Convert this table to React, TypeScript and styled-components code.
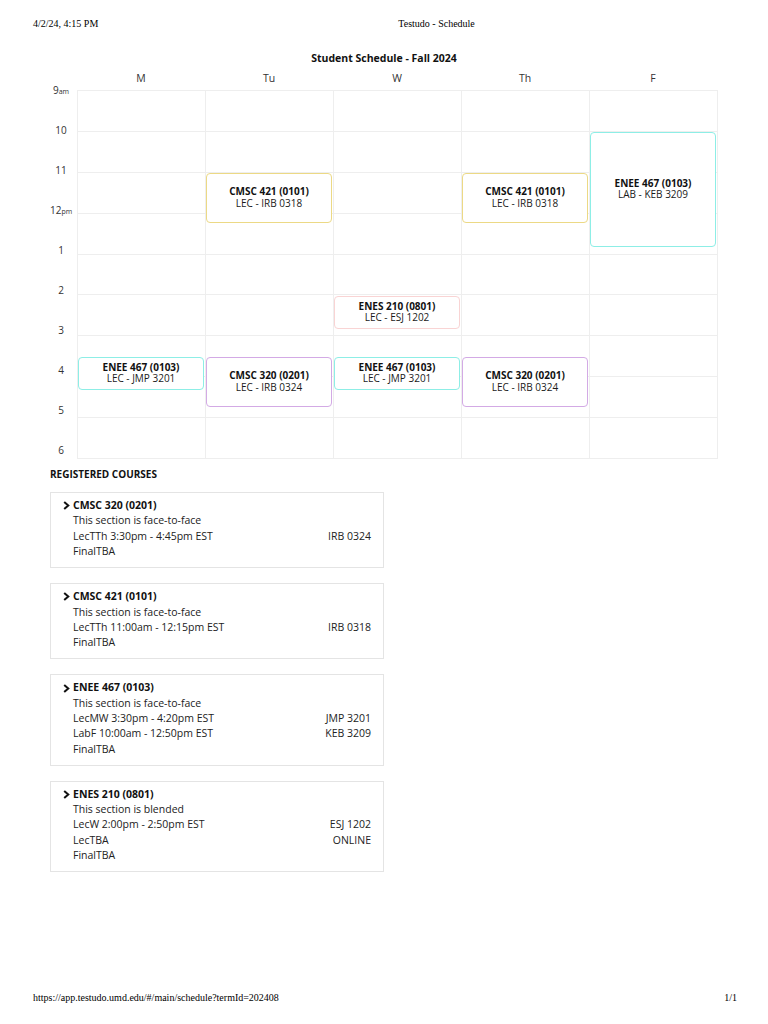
import React from "react";
import styled, { createGlobalStyle } from "styled-components";

const GlobalStyle = createGlobalStyle`
  html, body { margin: 0; padding: 0; background: #fff; }
  * { box-sizing: border-box; }
`;

const ROW_H = 40.9;
const START_HOUR = 9;

const Page = styled.div`
  min-height: 1024px;
  display: flex;
  flex-direction: column;
  padding: 18px 31px 20px 33px;
  color: #000;
`;

const PrintBar = styled.div`
  display: flex;
  justify-content: space-between;
  font-family: "Liberation Serif", "Times New Roman", serif;
  font-size: 10px;
  line-height: 12px;
  color: #000;
`;

const PrintHeader = styled(PrintBar)`
  justify-content: flex-start;
`;

const PrintTitle = styled.span`
  margin-left: 300px;
`;

const PrintFooter = styled(PrintBar)`
  margin-top: auto;
`;

const Main = styled.main`
  margin-left: 17px;
  width: 668px;
  font-family: "Open Sans", "Noto Sans", sans-serif;
  color: #1c1c1c;
`;

const Title = styled.h1`
  margin: 21px 0 0;
  text-align: center;
  font-size: 10.5px;
  line-height: 14px;
  font-weight: 700;
  color: #111;
`;

const DayRow = styled.div`
  display: flex;
  padding-left: 27px;
  margin: 6px 0 5px;
`;

const DayName = styled.div`
  width: 128px;
  text-align: center;
  font-size: 10.5px;
  line-height: 14px;
  color: #333;
`;

const CalendarBody = styled.div`
  display: flex;
  align-items: flex-start;
`;

const TimeCol = styled.div`
  width: 22px;
  margin-right: 5px;
  margin-top: -7px;
  display: flex;
  flex-direction: column;
`;

const TimeLabel = styled.div`
  height: 40px;
  line-height: 14px;
  text-align: center;
  font-size: 10px;
  white-space: nowrap;
  color: #333;

  &:last-child {
    height: 14px;
  }
`;

const Suffix = styled.span`
  font-size: 7px;
`;

const Grid = styled.div`
  display: flex;
  border-top: 1px solid #eeeeee;
  border-right: 1px solid #eeeeee;
`;

const DayCol = styled.div`
  position: relative;
  width: 128px;
  border-left: 1px solid #eeeeee;
`;

const HourCell = styled.div`
  height: ${ROW_H}px;
  border-bottom: 1px solid #eeeeee;
`;

const Event = styled.div<{ $color: string }>`
  position: absolute;
  left: 0;
  right: 1px;
  border: 1px solid ${(p) => p.$color};
  border-radius: 4px;
  background: #fff;
  display: flex;
  flex-direction: column;
  align-items: center;
  justify-content: center;
  font-size: 10px;
  line-height: 11.5px;
  text-align: center;
  color: #1a1a1a;
`;

const EventCode = styled.div`
  font-weight: 700;
  color: #111;
`;

const SectionTitle = styled.h2`
  margin: 8px 0 11px;
  font-size: 10px;
  line-height: 14px;
  font-weight: 700;
  color: #111;
`;

const CardList = styled.div`
  display: flex;
  flex-direction: column;
  gap: 15px;
  width: 334px;
`;

const Card = styled.div`
  border: 1px solid #e4e4e4;
  padding: 5px 12px 8px 12px;
  font-size: 10.5px;
  line-height: 15.3px;
  color: #222;
`;

const CardTitle = styled.div`
  display: flex;
  align-items: center;
  gap: 3px;
  font-weight: 700;
  color: #111;
`;

const Chevron = styled.svg`
  width: 7px;
  height: 9px;
  flex: none;
`;

const Line = styled.div`
  display: flex;
  justify-content: space-between;
  padding-left: 10px;
`;

const COLORS = {
  yellow: "#ecd985",
  cyan: "#8deee6",
  pink: "#f9d4d4",
  purple: "#d3aae5",
};

type Ev = { code: string; loc: string; start: number; end: number; color: string };

const days: { name: string; events: Ev[] }[] = [
  {
    name: "M",
    events: [{ code: "ENEE 467 (0103)", loc: "LEC - JMP 3201", start: 15.5, end: 16 + 20 / 60, color: COLORS.cyan }],
  },
  {
    name: "Tu",
    events: [
      { code: "CMSC 421 (0101)", loc: "LEC - IRB 0318", start: 11, end: 12.25, color: COLORS.yellow },
      { code: "CMSC 320 (0201)", loc: "LEC - IRB 0324", start: 15.5, end: 16.75, color: COLORS.purple },
    ],
  },
  {
    name: "W",
    events: [
      { code: "ENES 210 (0801)", loc: "LEC - ESJ 1202", start: 14, end: 14 + 50 / 60, color: COLORS.pink },
      { code: "ENEE 467 (0103)", loc: "LEC - JMP 3201", start: 15.5, end: 16 + 20 / 60, color: COLORS.cyan },
    ],
  },
  {
    name: "Th",
    events: [
      { code: "CMSC 421 (0101)", loc: "LEC - IRB 0318", start: 11, end: 12.25, color: COLORS.yellow },
      { code: "CMSC 320 (0201)", loc: "LEC - IRB 0324", start: 15.5, end: 16.75, color: COLORS.purple },
    ],
  },
  {
    name: "F",
    events: [{ code: "ENEE 467 (0103)", loc: "LAB - KEB 3209", start: 10, end: 12 + 50 / 60, color: COLORS.cyan }],
  },
];

const times: { n: string; s?: string }[] = [
  { n: "9", s: "am" },
  { n: "10" },
  { n: "11" },
  { n: "12", s: "pm" },
  { n: "1" },
  { n: "2" },
  { n: "3" },
  { n: "4" },
  { n: "5" },
  { n: "6" },
];

type Course = { title: string; mode: string; rows: [string, string][] };

const courses: Course[] = [
  {
    title: "CMSC 320 (0201)",
    mode: "This section is face-to-face",
    rows: [
      ["LecTTh 3:30pm - 4:45pm EST", "IRB 0324"],
      ["FinalTBA", ""],
    ],
  },
  {
    title: "CMSC 421 (0101)",
    mode: "This section is face-to-face",
    rows: [
      ["LecTTh 11:00am - 12:15pm EST", "IRB 0318"],
      ["FinalTBA", ""],
    ],
  },
  {
    title: "ENEE 467 (0103)",
    mode: "This section is face-to-face",
    rows: [
      ["LecMW 3:30pm - 4:20pm EST", "JMP 3201"],
      ["LabF 10:00am - 12:50pm EST", "KEB 3209"],
      ["FinalTBA", ""],
    ],
  },
  {
    title: "ENES 210 (0801)",
    mode: "This section is blended",
    rows: [
      ["LecW 2:00pm - 2:50pm EST", "ESJ 1202"],
      ["LecTBA", "ONLINE"],
      ["FinalTBA", ""],
    ],
  },
];

const HOURS = 9;

export default function App() {
  return (
    <>
      <GlobalStyle />
      <Page>
        <PrintHeader>
          <span>4/2/24, 4:15 PM</span>
          <PrintTitle>Testudo - Schedule</PrintTitle>
        </PrintHeader>
        <Main>
          <Title>Student Schedule - Fall 2024</Title>
          <DayRow>
            {days.map((d) => (
              <DayName key={d.name}>{d.name}</DayName>
            ))}
          </DayRow>
          <CalendarBody>
            <TimeCol>
              {times.map((t) => (
                <TimeLabel key={t.n}>
                  {t.n}
                  {t.s && <Suffix>{t.s}</Suffix>}
                </TimeLabel>
              ))}
            </TimeCol>
            <Grid>
              {days.map((d) => (
                <DayCol key={d.name}>
                  {Array.from({ length: HOURS }).map((_, i) => (
                    <HourCell key={i} />
                  ))}
                  {d.events.map((e) => (
                    <Event
                      key={e.code + e.start}
                      $color={e.color}
                      style={{
                        top: (e.start - START_HOUR) * ROW_H,
                        height: (e.end - e.start) * ROW_H - 1,
                      }}
                    >
                      <EventCode>{e.code}</EventCode>
                      <div>{e.loc}</div>
                    </Event>
                  ))}
                </DayCol>
              ))}
            </Grid>
          </CalendarBody>
          <SectionTitle>REGISTERED COURSES</SectionTitle>
          <CardList>
            {courses.map((c) => (
              <Card key={c.title}>
                <CardTitle>
                  <Chevron viewBox="0 0 7 9">
                    <polyline points="1.2,0.9 5.3,4.5 1.2,8.1" fill="none" stroke="#111" strokeWidth="2" />
                  </Chevron>
                  {c.title}
                </CardTitle>
                <Line>
                  <span>{c.mode}</span>
                </Line>
                {c.rows.map(([l, r]) => (
                  <Line key={l}>
                    <span>{l}</span>
                    <span>{r}</span>
                  </Line>
                ))}
              </Card>
            ))}
          </CardList>
        </Main>
        <PrintFooter>
          <span>https://app.testudo.umd.edu/#/main/schedule?termId=202408</span>
          <span>1/1</span>
        </PrintFooter>
      </Page>
    </>
  );
}
